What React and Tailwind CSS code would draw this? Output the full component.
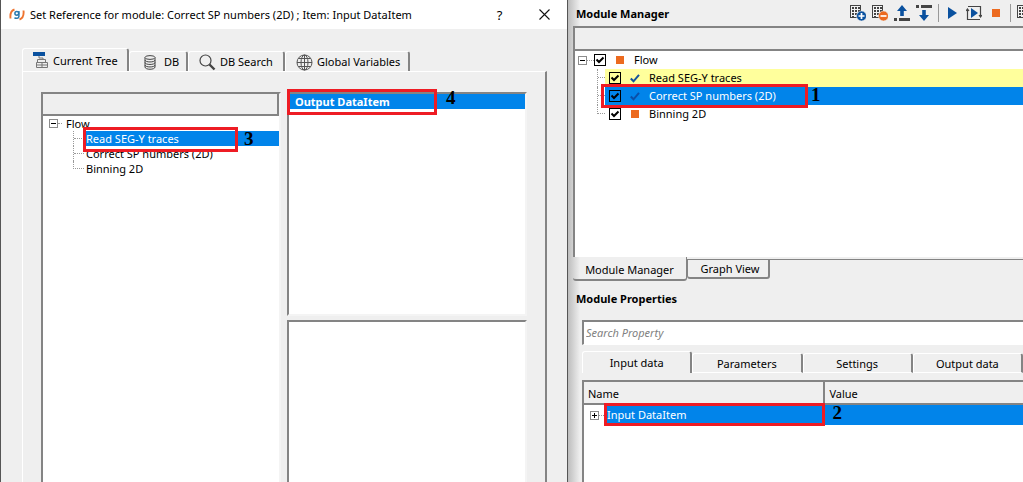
import React from "react";

const sunken = "border-2 border-t-[#848484] border-l-[#848484] border-r-[#f4f4f4] border-b-[#f4f4f4] bg-white";
const redBox = "pointer-events-none absolute z-10 border-3 border-[#ee1c24]";
const mark = "pointer-events-none absolute z-10 font-['Liberation_Serif',serif] text-[19px] font-bold leading-4 text-black";

function Expander({ plus }) {
  return (
    <svg width="9" height="9" viewBox="0 0 9 9" shapeRendering="crispEdges" aria-hidden="true">
      <rect x="0.5" y="0.5" width="8" height="8" fill="#fff" stroke="#8c8c8c" />
      <path d={plus ? "M2 4.5H7M4.5 2V7" : "M2 4.5H7"} stroke="#000" />
    </svg>
  );
}

function GridSheet({ children, label }) {
  return (
    <button aria-label={label} className="flex h-4 w-4 shrink-0">
      <svg width="16" height="16" viewBox="0 0 16 16" className="shrink-0" aria-hidden="true">
        <rect x="0.5" y="0.5" width="10" height="12" fill="#f4f4f4" stroke="#444" />
        <g fill="#444">
          <path d="M2 2h2v2H2zM5 2h2v2H5zM8 2h2v2H8zM2 5h2v2H2zM5 5h2v2H5zM8 5h2v2H8zM2 8h2v2H2zM5 8h2v2H5zM2 11h2v1H2z" />
        </g>
        {children}
      </svg>
    </button>
  );
}

function Status({ done, dark }) {
  return done ? (
    <svg width="10" height="9" viewBox="0 0 10 9" aria-hidden="true">
      <path d="M0.800 4.500 3.500 7.300 9 0.800" fill="none" stroke={dark ? "#0a4fa8" : "#14549c"} strokeWidth="2" />
    </svg>
  ) : (
    <svg width="10" height="8" viewBox="0 0 10 8" aria-hidden="true">
      <rect x="1" width="8" height="8" fill="#ec6a1f" />
    </svg>
  );
}

function Tick({ label }) {
  return (
    <span className="relative flex h-3 w-3 shrink-0">
      <input type="checkbox" defaultChecked aria-label={label} className="peer h-3 w-3 appearance-none border border-black bg-transparent" />
      <svg className="pointer-events-none absolute inset-0 hidden peer-checked:block" width="12" height="12" viewBox="0 0 12 12" aria-hidden="true">
        <path d="M2.500 5.500 5 8 9.500 3.500" fill="none" stroke="#000" strokeWidth="2" />
      </svg>
    </span>
  );
}

function ModuleRow({ name, done, tone, last, selected }) {
  return (
    <li className="relative flex h-[18px] pl-[22px]">
      <span className={last ? "h-[9px] w-2 shrink-0 border-b border-l border-dotted border-[#999]" : "w-2 shrink-0 border-l border-dotted border-[#999]"}>
        {!last && <span className="block h-[9px] border-b border-dotted border-[#999]" />}
      </span>
      <span className={`flex flex-1 items-center pl-1 ${tone}`}>
        <Tick label={name} />
        <span className="ml-[9px] flex w-[10px]"><Status done={done} dark={selected} /></span>
        <span className="ml-[9px] whitespace-nowrap">{name}</span>
      </span>
      {selected && (
        <>
          <span className={`${redBox} -top-[3px] left-[26px] h-6 w-[207px]`} />
          <span className={`${mark} left-[236px] top-0`}>1</span>
        </>
      )}
    </li>
  );
}

function DialogTab({ icon, label, active, width }) {
  return (
    <button
      role="tab"
      aria-selected={!!active}
      className={`flex shrink-0 items-center gap-1 whitespace-nowrap rounded-t-[3px] border-t border-l border-r-2 border-t-white border-l-white border-r-[#848484] pl-2.5 pt-px ${width} ${
        active ? "h-[23px] bg-[#efefef]" : "h-5"
      }`}
    >
      {icon}
      <span>{label}</span>
    </button>
  );
}

const TreeIcon = (
  <svg width="16" height="17" viewBox="0 0 16 17" aria-hidden="true">
    <rect width="12" height="4" fill="#0a519f" />
    <path d="M6 4v2h4v2" fill="none" stroke="#777" />
    <path d="M4.500 7.500h8v3h-8zM3.500 10.500h11v5h-11zM3.500 13h11M9 10.500v5" fill="#eee" stroke="#777" />
  </svg>
);
const DbIcon = (
  <svg width="12" height="15" viewBox="0 0 12 15" className="mx-1" aria-hidden="true">
    <g fill="#efefef" stroke="#444">
      <path d="M1 2.500v9.500c0 3 10 3 10 0V2.500" />
      <ellipse cx="6" cy="2.500" rx="5" ry="1.900" />
      <path d="M1 5c0 2.600 10 2.600 10 0M1 7.500c0 2.600 10 2.600 10 0M1 10c0 2.600 10 2.600 10 0" fill="none" />
    </g>
  </svg>
);
const SearchIcon = (
  <svg width="17" height="17" viewBox="0 0 17 17" aria-hidden="true">
    <circle cx="6.500" cy="6.500" r="5.500" fill="none" stroke="#444" strokeWidth="1.200" />
    <path d="m10.500 10.500 5 5" stroke="#444" strokeWidth="2.400" />
  </svg>
);
const GlobeIcon = (
  <svg width="17" height="17" viewBox="0 0 17 17" fill="none" stroke="#555" aria-hidden="true">
    <circle cx="8.500" cy="8.500" r="7.500" />
    <ellipse cx="8.500" cy="8.500" rx="3.500" ry="7.500" />
    <path d="M8.500 1v15M1 8.500h15M2.500 4.500h12M2.500 12.500h12" />
  </svg>
);

function Dialog() {
  return (
    <section aria-label="Set Reference" className="flex min-w-0 flex-col border-l border-r border-[#555] bg-[#efefef]">
      <header className="flex h-[29px] shrink-0 items-center bg-white pl-2">
        <svg width="16" height="14" viewBox="0 0 16 14" aria-hidden="true">
          <path d="M5.500 1.500C2.500 2.500 1 6 1.500 10.500M10.500 11.500c3-1 4.500-4.500 4-9" fill="none" stroke="#ee7430" strokeWidth="1.900" />
          <circle cx="7.800" cy="5.300" r="1.900" fill="none" stroke="#2c79ae" strokeWidth="1.500" />
          <path d="M9.900 3v5.500c0 2.300-3.200 2.200-4.400 1.100" fill="none" stroke="#2c79ae" strokeWidth="1.500" />
        </svg>
        <h1 className="ml-[5px] flex-1 whitespace-nowrap">Set Reference for module: Correct SP numbers (2D) ; Item: Input DataItem</h1>
        <button aria-label="Help" className="w-[45px] text-[13px]">?</button>
        <button aria-label="Close" className="flex w-[45px] justify-center">
          <svg width="11" height="11" viewBox="0 0 11 11" aria-hidden="true"><path d="m0.500 0.500 10 10m0-10-10 10" stroke="#111" strokeWidth="1.100" /></svg>
        </button>
      </header>
      <div className="flex flex-1 flex-col pl-[21px] pr-5 pt-5">
        <div role="tablist" className="flex h-[22px] items-end">
          <DialogTab active icon={TreeIcon} label="Current Tree" width="w-[107px]" />
          <DialogTab icon={DbIcon} label="DB" width="w-[59px]" />
          <DialogTab icon={SearchIcon} label="DB Search" width="w-[97px]" />
          <DialogTab icon={GlobeIcon} label="Global Variables" width="w-[125px]" />
        </div>
        <div className="grid flex-1 grid-cols-2 gap-[6px] border-t border-l border-r-2 border-t-white border-l-white border-r-[#848484] pl-[18px] pr-[18px] pt-5">
          <div className="flex min-w-0 flex-col border-2 border-b-0 border-l-[#848484] border-r-[#f4f4f4] border-t-[#848484] bg-white">
            <div className="h-[22px] border-b-2 border-r-2 border-[#848484] bg-[#efefef]" />
            <ul>
              <li className="flex h-[15px] items-center pl-1.5">
                <Expander />
                <span className="w-1 border-b border-dotted border-[#999]" />
                <span className="ml-1">Flow</span>
              </li>
              <li className="relative flex h-[15px] pl-[30px]">
                <span className="w-[11px] border-l border-dotted border-[#999]"><span className="block h-2 border-b border-dotted border-[#999]" /></span>
                <span className="flex flex-1 items-center whitespace-nowrap bg-[#0184ea] pl-0.5 text-white">Read SEG-Y traces</span>
                <span className={`${redBox} -top-1 left-10 h-[25px] w-[155px]`} />
                <span className={`${mark} left-[201px] top-0`}>3</span>
              </li>
              <li className="flex h-[15px] pl-[30px]">
                <span className="w-[11px] border-l border-dotted border-[#999]"><span className="block h-2 border-b border-dotted border-[#999]" /></span>
                <span className="flex items-center whitespace-nowrap pl-0.5">Correct SP numbers (2D)</span>
              </li>
              <li className="flex h-[15px] pl-[30px]">
                <span className="h-2 w-[11px] border-b border-l border-dotted border-[#999]" />
                <span className="flex items-center whitespace-nowrap pl-0.5">Binning 2D</span>
              </li>
            </ul>
          </div>
          <div className="grid min-w-0 grid-rows-[224px_1fr] gap-1">
            <div className={sunken}>
              <div className="relative flex h-[15px] items-center bg-[#0184ea] pl-1.5 font-bold text-white">
                Output DataItem
                <span className={`${redBox} -left-0.5 -top-[5px] h-[26px] w-[150px]`} />
                <span className={`${mark} left-[157px] -top-1`}>4</span>
              </div>
            </div>
            <div className={`${sunken} border-b-0`} />
          </div>
        </div>
      </div>
    </section>
  );
}

function Toolbar() {
  return (
    <div className="flex h-[26px] items-center gap-1.5">
      <GridSheet label="Add module">
        <circle cx="11.500" cy="11" r="5" fill="#0a519f" stroke="#efefef" strokeWidth="0.600" />
        <path d="M8.500 11h6M11.500 8v6" stroke="#fff" strokeWidth="1.700" />
      </GridSheet>
      <GridSheet label="Remove module">
        <circle cx="11.500" cy="11" r="5" fill="#ec6a1f" stroke="#efefef" strokeWidth="0.600" />
        <path d="M8.500 11h6" stroke="#fff" strokeWidth="1.700" />
      </GridSheet>
      <button aria-label="Move up">
        <svg width="16" height="16" viewBox="0 0 16 16"><path d="m8 0 5 6H9.800v5H6.200V6H3z" fill="#0a519f" /><path d="M0 13h3v3H0zM5 13h11v3H5z" fill="#444" /></svg>
      </button>
      <button aria-label="Move down">
        <svg width="16" height="16" viewBox="0 0 16 16"><path d="m8 16 5-6H9.800V5H6.200v5H3z" fill="#0a519f" /><path d="M0 0h3v3H0zM5 0h11v3H5z" fill="#444" /></svg>
      </button>
      <span className="h-[18px] w-px bg-[#999]" />
      <button aria-label="Run" className="mx-[3px]">
        <svg width="9" height="12" viewBox="0 0 9 12"><path d="M0 0v12l9-6z" fill="#0a519f" /></svg>
      </button>
      <button aria-label="Run flow">
        <svg width="16" height="16" viewBox="0 0 16 16"><path d="M5 3v10l7-5z" fill="#0a519f" /><path d="M2 1.500h12.500v10M1.500 4v10.500H14M0 6l1.500-2L3 6M13 10l1.500 2L16 10" fill="none" stroke="#444" strokeWidth="1.200" /></svg>
      </button>
      <button aria-label="Stop" className="mx-1">
        <svg width="8" height="8" viewBox="0 0 8 8"><rect width="8" height="8" fill="#ec6a1f" /></svg>
      </button>
      <span className="h-[18px] w-px bg-[#999]" />
      <span className="flex w-1.5 overflow-hidden"><GridSheet label="Modules" /></span>
    </div>
  );
}

function PropertyTab({ label, active }) {
  return (
    <button
      role="tab"
      aria-selected={!!active}
      className={`flex flex-1 items-center justify-center whitespace-nowrap rounded-t-[3px] border-t border-l border-r-2 border-t-white border-l-white border-r-[#848484] ${
        active ? "h-[22px]" : "h-5 border-b border-b-white pt-0.5"
      }`}
    >
      {label}
    </button>
  );
}

function Manager() {
  return (
    <main className="flex min-w-0 flex-col overflow-hidden bg-[linear-gradient(to_right,#bdbdbd,#efefef_12px)] pl-[5px]">
      <div className="flex items-center justify-between pl-[3px]">
        <h2 className="whitespace-nowrap pt-0.5 font-bold">Module Manager</h2>
        <Toolbar />
      </div>
      <div className="h-[231px] shrink-0 border-l-2 border-t-2 border-[#848484] bg-white">
        <div className="h-[23px] border-b-2 border-[#848484] bg-[#efefef]" />
        <ul>
          <li className="flex h-[18px] items-center pl-[3px]">
            <Expander />
            <span className="w-[7px] border-b border-dotted border-[#999]" />
            <Tick label="Flow" />
            <span className="ml-[9px] flex w-[10px]"><Status /></span>
            <span className="ml-[9px]">Flow</span>
          </li>
          <ModuleRow name="Read SEG-Y traces" done tone="bg-[#ffff9c]" />
          <ModuleRow name="Correct SP numbers (2D)" done selected tone="bg-[#0184ea] text-white" />
          <ModuleRow name="Binning 2D" tone="" last />
        </ul>
      </div>
      <div role="tablist" className="flex items-start">
        <button role="tab" aria-selected="true" className="h-6 w-[114px] whitespace-nowrap rounded-b-[3px] border-b-2 border-r border-[#848484] pt-1">Module Manager</button>
        <button role="tab" aria-selected="false" className="mt-0.5 h-5 w-[83px] whitespace-nowrap rounded-b-[3px] border-b-2 border-r-2 border-l border-t border-[#848484] pl-1">Graph View</button>
        <span className="mt-0.5 flex-1 border-t border-[#848484]" />
      </div>
      <h2 className="pb-[13px] pl-[3px] pt-[9px] font-bold leading-[17px]">Module Properties</h2>
      <div className="flex flex-1 flex-col pl-[9px]">
        <input aria-label="Search Property" placeholder="Search Property" className="h-[25px] border-b border-l-2 border-t-2 border-b-white border-l-[#848484] border-t-[#848484] bg-white pb-0.5 pl-0.5 italic placeholder:text-[#808080]" />
        <div role="tablist" className="mt-1.5 flex h-[22px] items-end">
          <PropertyTab active label="Input data" />
          <PropertyTab label="Parameters" />
          <PropertyTab label="Settings" />
          <PropertyTab label="Output data" />
        </div>
        <div className="mt-[7px] flex-1 border-l-2 border-t-2 border-[#848484] bg-white">
          <table className="w-full table-fixed border-separate border-spacing-0">
            <colgroup><col className="w-[55%]" /><col /></colgroup>
            <thead>
              <tr className="h-[23px] bg-[#efefef] text-left">
                <th className="border-b-2 border-r-2 border-[#848484] p-0 pl-1 pt-0.5 font-normal">Name</th>
                <th className="border-b-2 border-[#848484] p-0 pl-1 pt-0.5 font-normal">Value</th>
              </tr>
            </thead>
            <tbody>
              <tr className="h-5">
                <td className="relative p-0">
                  <div className="flex h-5 items-center pl-1.5">
                    <Expander plus />
                    <span className="w-[7px] border-b border-dotted border-[#999]" />
                    <span className="flex h-full flex-1 items-center bg-[#0184ea] pl-px text-white">Input DataItem</span>
                  </div>
                  <span className={`${redBox} -top-0.5 -bottom-px left-5 right-0`} />
                </td>
                <td className="relative bg-[#0184ea] p-0"><span className={`${mark} left-[7px] top-0`}>2</span></td>
              </tr>
            </tbody>
          </table>
        </div>
      </div>
    </main>
  );
}

export default function App() {
  return (
    <div className="grid min-h-screen grid-cols-[568fr_455fr] overflow-hidden bg-[#efefef] font-['Noto_Sans','Open_Sans',sans-serif] text-[11px] leading-4 text-black">
      <Dialog />
      <Manager />
    </div>
  );
}
